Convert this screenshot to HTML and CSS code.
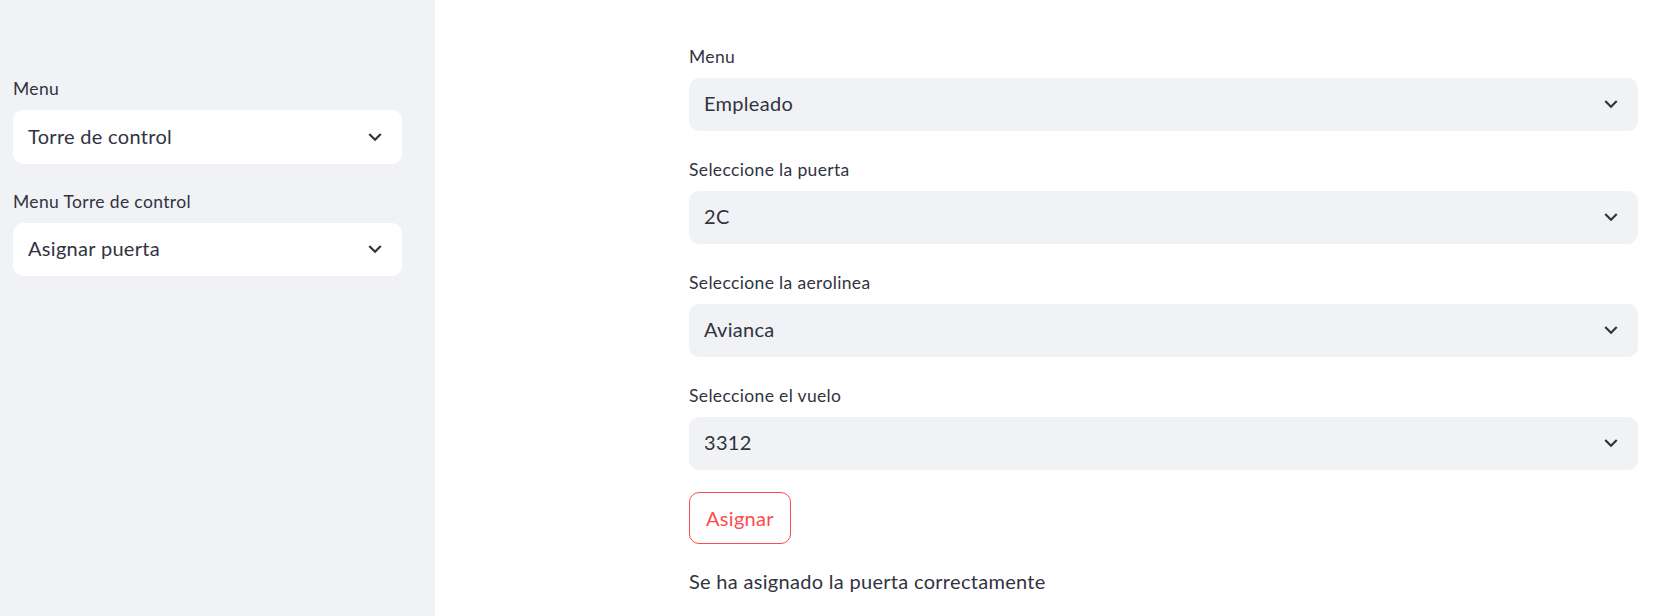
FILE: index.html
```html
<!DOCTYPE html>
<html lang="es">
<head>
<meta charset="utf-8">
<title>Torre de control</title>
<link rel="stylesheet" href="styles.css">
</head>
<body>
<div class="app">
  <aside class="sidebar">
    <div class="field">
      <div class="label">Menu</div>
      <div class="select">
        <span class="value">Torre de control</span>
        <svg class="chev" viewBox="0 0 24 24"><path d="M7.41 8.59L12 13.17l4.59-4.58L18 10l-6 6-6-6 1.41-1.41z"/></svg>
      </div>
    </div>
    <div class="field">
      <div class="label">Menu Torre de control</div>
      <div class="select">
        <span class="value">Asignar puerta</span>
        <svg class="chev" viewBox="0 0 24 24"><path d="M7.41 8.59L12 13.17l4.59-4.58L18 10l-6 6-6-6 1.41-1.41z"/></svg>
      </div>
    </div>
  </aside>
  <main class="main">
    <div class="field">
      <div class="label">Menu</div>
      <div class="select">
        <span class="value">Empleado</span>
        <svg class="chev" viewBox="0 0 24 24"><path d="M7.41 8.59L12 13.17l4.59-4.58L18 10l-6 6-6-6 1.41-1.41z"/></svg>
      </div>
    </div>
    <div class="field">
      <div class="label">Seleccione la puerta</div>
      <div class="select">
        <span class="value">2C</span>
        <svg class="chev" viewBox="0 0 24 24"><path d="M7.41 8.59L12 13.17l4.59-4.58L18 10l-6 6-6-6 1.41-1.41z"/></svg>
      </div>
    </div>
    <div class="field">
      <div class="label">Seleccione la aerolinea</div>
      <div class="select">
        <span class="value">Avianca</span>
        <svg class="chev" viewBox="0 0 24 24"><path d="M7.41 8.59L12 13.17l4.59-4.58L18 10l-6 6-6-6 1.41-1.41z"/></svg>
      </div>
    </div>
    <div class="field">
      <div class="label">Seleccione el vuelo</div>
      <div class="select">
        <span class="value">3312</span>
        <svg class="chev" viewBox="0 0 24 24"><path d="M7.41 8.59L12 13.17l4.59-4.58L18 10l-6 6-6-6 1.41-1.41z"/></svg>
      </div>
    </div>
    <div class="actions">
      <button class="btn" type="button">Asignar</button>
    </div>
    <p class="message">Se ha asignado la puerta correctamente</p>
  </main>
</div>
</body>
</html>
```

FILE: styles.css
```css
* { box-sizing: border-box; }
html, body {
  margin: 0;
  padding: 0;
  background: #ffffff;
  color: #31333F;
  font-family: Lato, "Noto Sans", sans-serif;
}
.app {
  display: flex;
  height: 616px;
  overflow: hidden;
}
.sidebar {
  width: 435px;
  flex: 0 0 435px;
  background: #F0F2F6;
  padding: 78px 33px 0 13px;
  display: flex;
  flex-direction: column;
  gap: 27px;
}
.main {
  flex: 1;
  padding: 46px 15px 0 254px;
  display: flex;
  flex-direction: column;
  gap: 28px;
}
.field {
  display: flex;
  flex-direction: column;
}
.label {
  font-size: 17.5px;
  line-height: 22px;
  margin-bottom: 9.5px;
  letter-spacing: 0.35px;
}
.sidebar .label { margin-bottom: 10px; }
.select {
  height: 53.5px;
  border-radius: 10px;
  background: #F0F2F6;
  display: flex;
  align-items: center;
  padding: 0 14px 2px 15px;
  font-size: 20px;
  line-height: 24px;
  letter-spacing: 0.3px;
}
.sidebar .select { background: #ffffff; }
.value { flex: 1; }
.chev {
  width: 26px;
  height: 26px;
  fill: #31333F;
  margin-top: 2px;
}
.actions {
  margin-top: -6px;
  display: flex;
}
.btn {
  height: 52px;
  padding: 0 16px;
  border: 1px solid #FF4B4B;
  border-radius: 10px;
  background: #ffffff;
  color: #FF4B4B;
  font-family: inherit;
  font-size: 20px;
  line-height: 24px;
  letter-spacing: 0.3px;
}
.message {
  margin: -7px 0 0 0;
  font-size: 20px;
  line-height: 32px;
  letter-spacing: 0.3px;
}
```
